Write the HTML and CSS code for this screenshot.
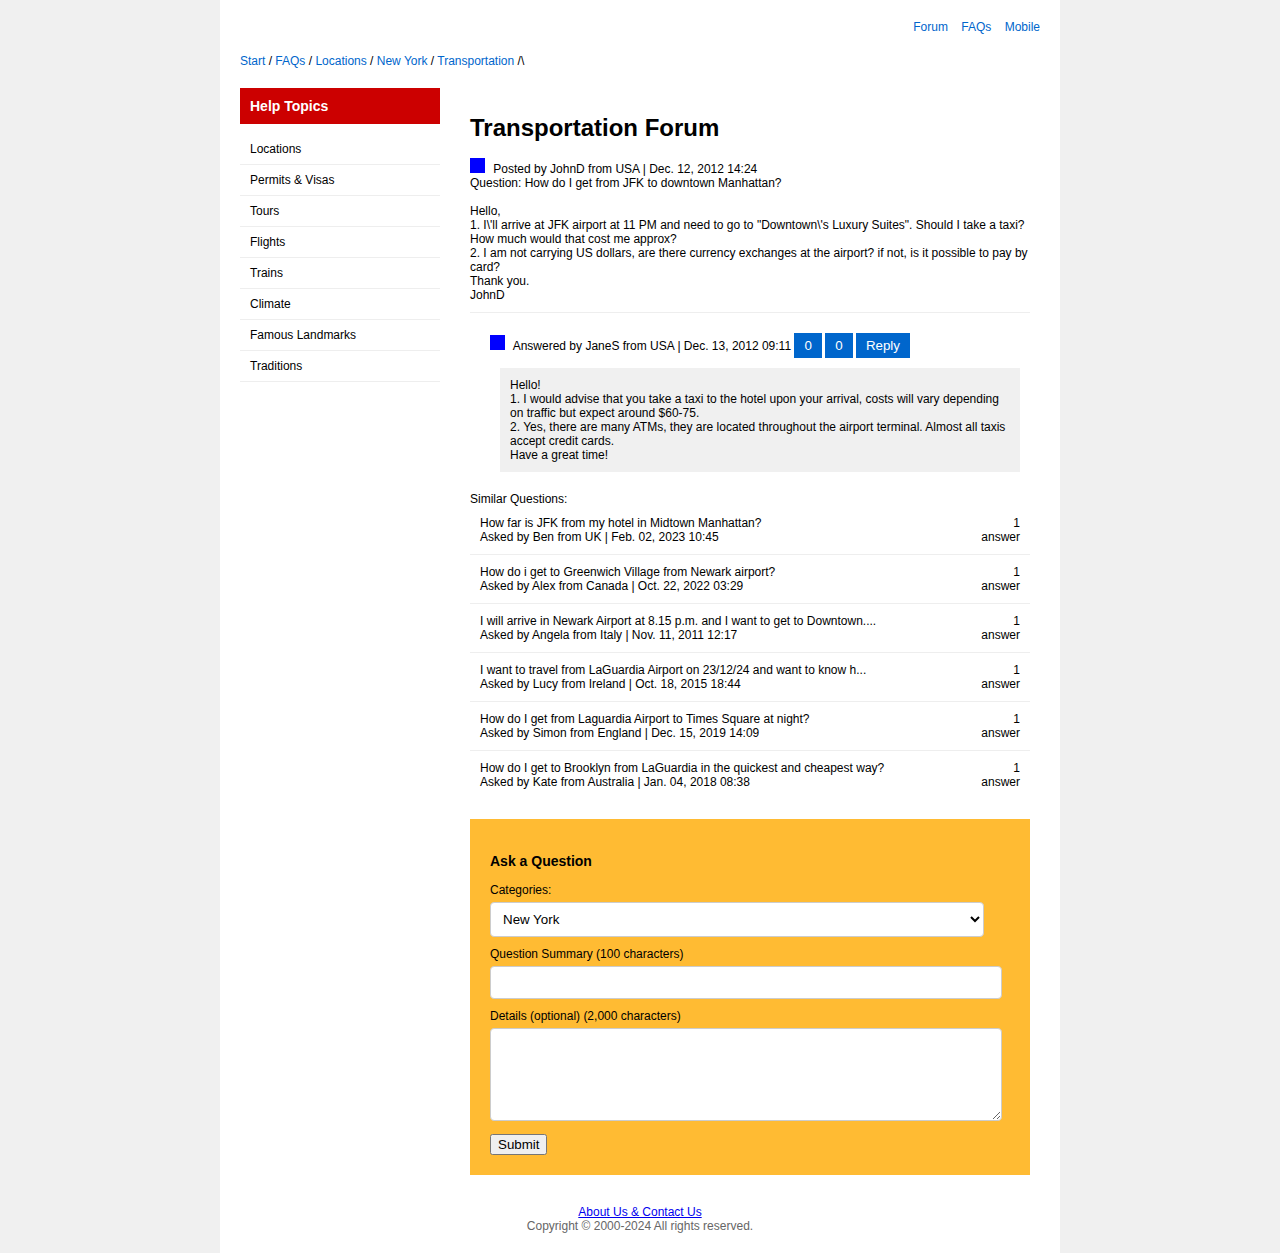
FILE: index.html
```html
<!DOCTYPE html>
<html lang="en">
<head>
<meta charset="utf-8">
<title>Transportation Forum</title>
<link rel="stylesheet" href="styles.css">
</head>
<body>
<div class="page">
  <nav class="top-nav">
    <a href="#">Forum</a>
    <a href="#">FAQs</a>
    <a href="#">Mobile</a>
  </nav>
  <nav class="breadcrumbs"><a href="#">Start</a> / <a href="#">FAQs</a> / <a href="#">Locations</a> / <a href="#">New York</a> / <a href="#">Transportation</a> /\</nav>
  <div class="columns">
    <aside class="sidebar">
      <h2 class="sidebar-title">Help Topics</h2>
      <ul class="topics">
        <li>Locations</li>
        <li>Permits &amp; Visas</li>
        <li>Tours</li>
        <li>Flights</li>
        <li>Trains</li>
        <li>Climate</li>
        <li>Famous Landmarks</li>
        <li>Traditions</li>
      </ul>
    </aside>
    <main class="content">
      <h1 class="title">Transportation Forum</h1>
      <article class="question">
        <span class="avatar"></span>
        Posted by JohnD from USA | Dec. 12, 2012 14:24<br>
        Question: How do I get from JFK to downtown Manhattan?<br><br>
        Hello,<br>
        1. I\'ll arrive at JFK airport at 11 PM and need to go to "Downtown\'s Luxury Suites". Should I take a taxi? How much would that cost me approx?<br>
        2. I am not carrying US dollars, are there currency exchanges at the airport? if not, is it possible to pay by card?<br>
        Thank you.<br>
        JohnD
      </article>
      <article class="answer">
        <div>
          <span class="avatar"></span>
          Answered by JaneS from USA | Dec. 13, 2012 09:11
          <button class="action" type="button">0</button>
          <button class="action" type="button">0</button>
          <button class="action" type="button">Reply</button>
        </div>
        <div class="answer-text">Hello!<br>
          1. I would advise that you take a taxi to the hotel upon your arrival, costs will vary depending on traffic but expect around $60-75.<br>
          2. Yes, there are many ATMs, they are located throughout the airport terminal. Almost all taxis accept credit cards.<br>
          Have a great time!</div>
      </article>
      <section class="similar">
        <div>Similar Questions:</div>
        <ul class="similar-list">
          <li><div>How far is JFK from my hotel in Midtown Manhattan?<br>Asked by Ben from UK | Feb. 02, 2023 10:45</div><div class="count">1<br>answer</div></li>
          <li><div>How do i get to Greenwich Village from Newark airport?<br>Asked by Alex from Canada | Oct. 22, 2022 03:29</div><div class="count">1<br>answer</div></li>
          <li><div>I will arrive in Newark Airport at 8.15 p.m. and I want to get to Downtown....<br>Asked by Angela from Italy | Nov. 11, 2011 12:17</div><div class="count">1<br>answer</div></li>
          <li><div>I want to travel from LaGuardia Airport on 23/12/24 and want to know h...<br>Asked by Lucy from Ireland | Oct. 18, 2015 18:44</div><div class="count">1<br>answer</div></li>
          <li><div>How do I get from Laguardia Airport to Times Square at night?<br>Asked by Simon from England | Dec. 15, 2019 14:09</div><div class="count">1<br>answer</div></li>
          <li><div>How do I get to Brooklyn from LaGuardia in the quickest and cheapest way?<br>Asked by Kate from Australia | Jan. 04, 2018 08:38</div><div class="count">1<br>answer</div></li>
        </ul>
      </section>
      <form class="ask">
        <h3 class="ask-title">Ask a Question</h3>
        <label for="category">Categories:</label>
        <select id="category" class="field field-select"><option>New York</option></select>
        <label for="summary">Question Summary (100 characters)</label>
        <input id="summary" class="field" type="text" maxlength="100">
        <label for="details">Details (optional) (2,000 characters)</label>
        <textarea id="details" class="field" rows="5" maxlength="2000"></textarea>
        <button class="submit" type="submit">Submit</button>
      </form>
    </main>
  </div>
  <footer class="footer"><a href="#">About Us &amp; Contact Us</a><br>Copyright © 2000-2024 All rights reserved.</footer>
</div>
</body>
</html>
```
FILE: styles.css
```css
body {
  margin: 0;
  background: #f0f0f0;
  color: #000;
  font: 12px/14px "Liberation Sans", Arial, sans-serif;
}

.page {
  box-sizing: border-box;
  max-width: 840px;
  margin: 0 auto;
  padding: 20px;
  background: #fff;
}

.top-nav {
  margin-bottom: 20px;
  text-align: right;
}

.top-nav a {
  margin-left: 10px;
}

.top-nav a,
.breadcrumbs a {
  color: #06c;
  text-decoration: none;
}

.breadcrumbs {
  margin-bottom: 20px;
}

.columns {
  display: flex;
  gap: 20px;
}

.sidebar {
  flex: 0 0 200px;
}

.sidebar-title {
  margin: 0 0 10px;
  padding: 10px;
  background: #c00;
  color: #fff;
  font-size: 14px;
  line-height: 16px;
}

.topics,
.similar-list {
  margin: 0;
  padding: 0;
  list-style: none;
}

.topics li {
  padding: 8px 10px;
  border-bottom: 1px solid #eee;
}

.content {
  flex: 1;
  min-width: 0;
  padding: 10px;
}

.title {
  margin: 16px 0;
  font-size: 24px;
  line-height: 28px;
}

.avatar {
  display: inline-block;
  width: 15px;
  height: 15px;
  margin-right: 5px;
  background: #00f;
}

.question {
  padding-bottom: 10px;
  border-bottom: 1px solid #eee;
}

.answer {
  padding: 20px 10px 20px 20px;
}

.action,
.submit,
.field {
  font-family: "Liberation Sans", Arial, sans-serif;
  line-height: 15px;
}

.action {
  padding: 5px 10px;
  border: 0;
  background: #06c;
  color: #fff;
}

.answer-text {
  margin: 10px 0 0 10px;
  padding: 10px;
  background: #f0f0f0;
}

.similar-list li {
  display: flex;
  justify-content: space-between;
  padding: 10px;
  border-bottom: 1px solid #eee;
}

.similar-list li:last-child {
  border-bottom: 0;
}

.count {
  text-align: right;
}

.ask {
  margin-top: 20px;
  padding: 20px;
  background: #fb3;
}

.ask-title {
  margin: 14px 0;
  font-size: 14px;
  line-height: 16px;
}

.ask label {
  display: block;
}

.field {
  display: block;
  box-sizing: border-box;
  width: 512px;
  max-width: 100%;
  margin: 5px 0 10px;
  padding: 8px;
  border: 1px solid #ccc;
  border-radius: 4px;
  background: #fff;
}

.field-select {
  width: 95%;
}

.submit {
  margin-top: 3px;
}

.footer {
  padding-top: 20px;
  color: #666;
  text-align: center;
}
```
